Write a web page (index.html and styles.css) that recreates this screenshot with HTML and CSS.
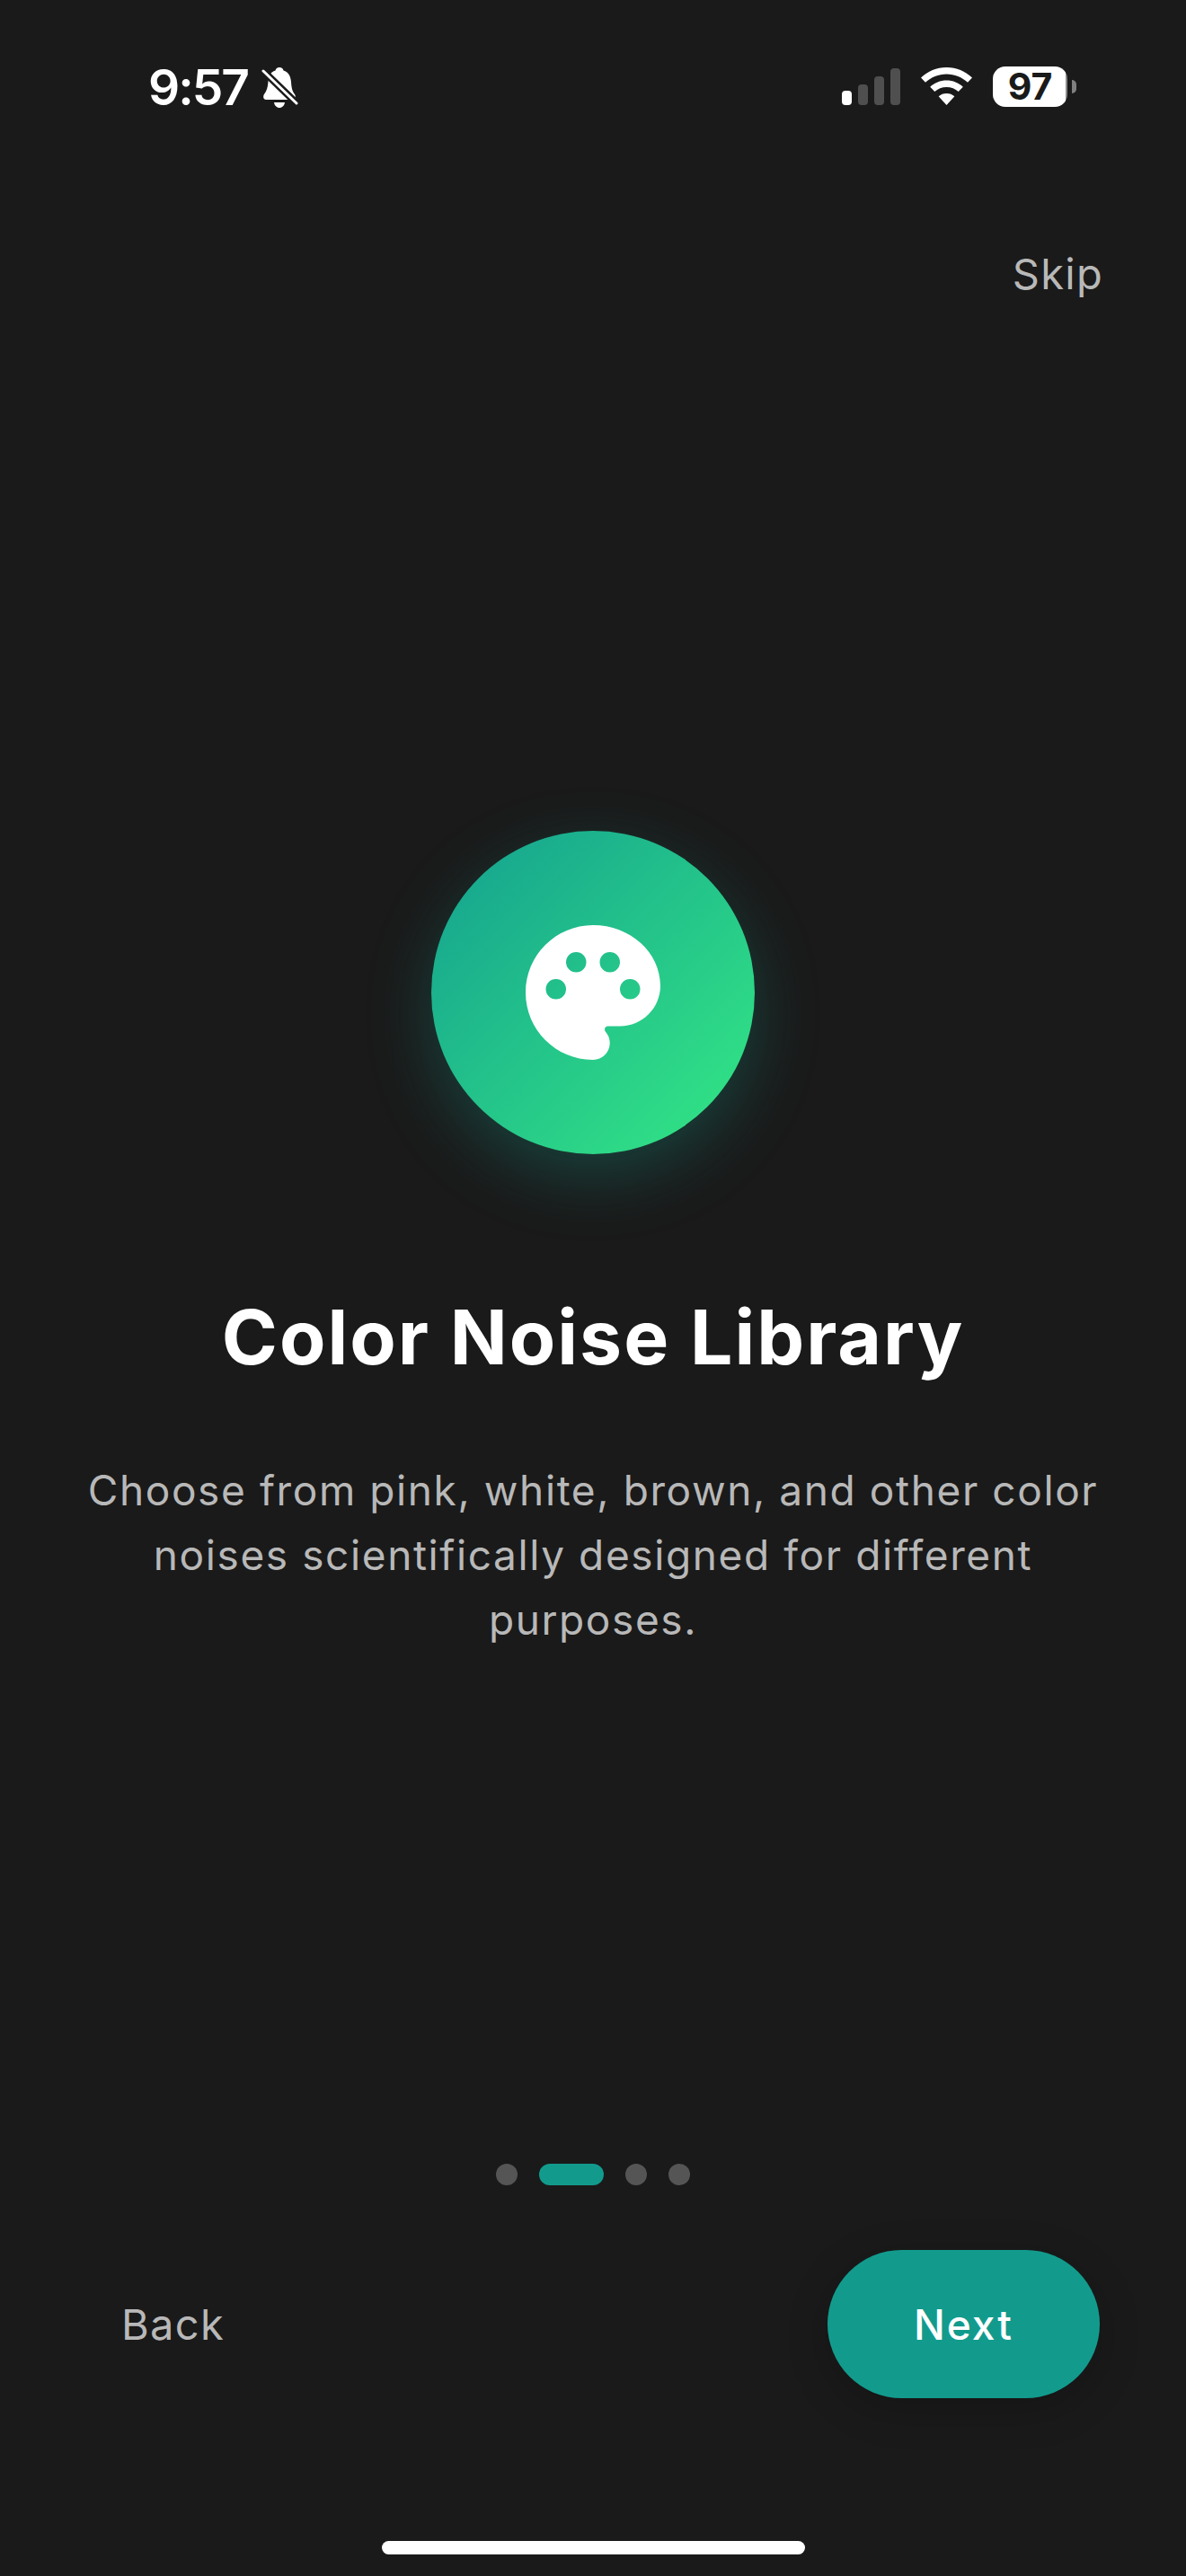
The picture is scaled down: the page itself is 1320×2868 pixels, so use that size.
FILE: index.html
```html
<!DOCTYPE html>
<html lang="en">

<head>
    <meta charset="UTF-8">
    <title>Color Noise Library</title>
    <link rel="stylesheet" href="styles.css">
</head>

<body>
    <div class="status-bar">
        <div class="status-left">
            <span class="time">9:57</span>
            <svg class="bell" viewBox="0 0 42 46">
                <path d="M20 0c2.500 0 4 1.500 4.500 3.500C30 5 32.500 10 33 16c.4 6 1 10 4 14 1.500 2 1 6-2 6H5c-3 0-3.500-4-2-6 3-4 4-8 4.500-14C8 10 10 5 15.500 3.500 16 1.500 17.500 0 20 0z" fill="#fff" />
                <path d="M14 39h12c-.5 3.500-3 6-6 6s-5.500-2.500-6-6z" fill="#fff" />
                <path d="M1 3l39 38" stroke="#1a1a1a" stroke-width="8" />
                <path d="M2 4l37 36" stroke="#fff" stroke-width="3" stroke-linecap="round" />
            </svg>
        </div>
        <div class="status-right">
            <div class="signal">
                <span class="bar bar-1 on"></span>
                <span class="bar bar-2"></span>
                <span class="bar bar-3"></span>
                <span class="bar bar-4"></span>
            </div>
            <svg class="wifi" viewBox="0 0 57 42">
                <path d="M28.500 0C39.500 0 49.500 4.300 57 11.500L52 16.800C45.800 11 37.500 7.500 28.500 7.500S11.200 11 5 16.800L0 11.500C7.500 4.300 17.500 0 28.500 0z" fill="#fff" />
                <path d="M28.500 14.500c7 0 13.500 2.700 18.300 7.200l-5.100 5.300c-3.500-3.200-8.100-5.100-13.200-5.100s-9.700 1.900-13.200 5.100l-5.100-5.300c4.800-4.500 11.300-7.200 18.300-7.200z" fill="#fff" />
                <path d="M28.500 29c3.400 0 6.500 1.200 8.900 3.300L28.500 42l-8.900-9.700c2.400-2.100 5.500-3.300 8.900-3.300z" fill="#fff" />
            </svg>
            <div class="battery">
                <div class="battery-body">97</div>
                <div class="battery-nub"></div>
            </div>
        </div>
    </div>

    <div class="top-row">
        <span class="skip">Skip</span>
    </div>

    <div class="content">
        <div class="icon-circle">
            <svg class="palette" viewBox="0 0 24 24">
                <path fill-rule="evenodd" d="M12 2C6.490 2 2 6.490 2 12s4.490 10 10 10c1.380 0 2.500-1.120 2.500-2.500 0-.610-.230-1.200-.640-1.670-.080-.100-.130-.210-.130-.330 0-.280.220-.500.500-.500H16c3.310 0 6-2.690 6-6 0-4.960-4.490-9-10-9zM6.500 10a1.500 1.500 0 1 0 0 3 1.500 1.500 0 1 0 0-3zM9.500 6a1.500 1.500 0 1 0 0 3 1.500 1.500 0 1 0 0-3zM14.500 6a1.500 1.500 0 1 0 0 3 1.500 1.500 0 1 0 0-3zM17.500 10a1.500 1.500 0 1 0 0 3 1.500 1.500 0 1 0 0-3z" fill="#fff" />
            </svg>
        </div>
        <h1>Color Noise Library</h1>
        <p>Choose from pink, white, brown, and other color noises scientifically designed for different purposes.</p>
    </div>

    <div class="dots">
        <span class="dot"></span>
        <span class="dot active"></span>
        <span class="dot"></span>
        <span class="dot"></span>
    </div>

    <div class="nav-row">
        <span class="back">Back</span>
        <button class="next">Next</button>
    </div>

    <div class="home-bar"></div>
</body>

</html>
```

FILE: styles.css
```css
* {
    box-sizing: border-box;
}

html,
body {
    height: 100%;
}

body {
    font-family: Inter, 'Liberation Sans', sans-serif;
    background-color: #1a1a1a;
    margin: 0;
    display: flex;
    flex-direction: column;
    overflow: hidden;
}

.status-bar {
    height: 194px;
    padding: 67px 122px 0 165px;
    display: flex;
    justify-content: space-between;
    align-items: flex-start;
}

.status-left {
    display: flex;
    align-items: center;
    gap: 15px;
}

.time {
    color: #fff;
    font-size: 55px;
    font-weight: 600;
    line-height: 60px;
    letter-spacing: -2px;
}

.bell {
    width: 42px;
    height: 46px;
    margin-top: 2px;
}

.status-right {
    display: flex;
    align-items: flex-end;
    height: 50px;
}

.signal {
    display: flex;
    align-items: flex-end;
    gap: 7px;
    margin-right: 23px;
}

.bar {
    width: 11px;
    border-radius: 4px;
    background-color: #4f4f4f;
}

.bar.on {
    background-color: #fff;
}

.bar-1 {
    height: 16px;
}

.bar-2 {
    height: 23px;
}

.bar-3 {
    height: 32px;
}

.bar-4 {
    height: 41px;
}

.wifi {
    width: 57px;
    height: 42px;
    margin-right: 23px;
}

.battery {
    display: flex;
    align-items: center;
    margin-bottom: -2px;
}

.battery-body {
    width: 83px;
    height: 45px;
    border-radius: 14px;
    background: linear-gradient(to right, #fff 97%, #8a8a8a 97%);
    color: #1a1a1a;
    font-size: 41px;
    font-weight: 700;
    line-height: 45px;
    text-align: center;
}

.battery-nub {
    width: 5px;
    height: 15px;
    margin-left: 5px;
    border-radius: 0 8px 8px 0;
    background-color: #808080;
}

.top-row {
    display: flex;
    justify-content: flex-end;
    padding: 83px 92px 0 0;
}

.skip {
    color: #b8b8b8;
    font-size: 47px;
    line-height: 56px;
    letter-spacing: 1.3px;
}

.content {
    display: flex;
    flex-direction: column;
    align-items: center;
    padding-top: 592px;
}

.icon-circle {
    width: 360px;
    height: 360px;
    border-radius: 50%;
    background: linear-gradient(135deg, #14a090, #34e884);
    box-shadow: 0 24px 72px rgba(20, 160, 144, 0.3);
    display: flex;
    align-items: center;
    justify-content: center;
}

.palette {
    width: 180px;
    height: 180px;
}

h1 {
    color: #fff;
    font-size: 84px;
    font-weight: 700;
    line-height: 100px;
    letter-spacing: 2px;
    margin: 154px 0 0;
}

p {
    color: #b8b8b8;
    font-size: 46px;
    line-height: 72px;
    letter-spacing: 1.6px;
    text-align: center;
    width: 1160px;
    margin: 84px 0 0;
}

.dots {
    margin-top: 570px;
    display: flex;
    justify-content: center;
    gap: 24px;
}

.dot {
    width: 24px;
    height: 24px;
    border-radius: 12px;
    background-color: #555;
}

.dot.active {
    width: 72px;
    background-color: #129b8d;
}

.nav-row {
    margin-top: 72px;
    padding: 0 96px 0 135px;
    display: flex;
    justify-content: space-between;
    align-items: center;
}

.back {
    color: #b8b8b8;
    font-size: 47px;
    letter-spacing: 1.3px;
}

.next {
    width: 303px;
    height: 165px;
    border: none;
    border-radius: 83px;
    background-color: #129b8d;
    color: #fff;
    font-family: inherit;
    font-size: 46px;
    font-weight: 500;
    letter-spacing: 2px;
    box-shadow: 0 12px 48px rgba(0, 0, 0, 0.2);
}

.home-bar {
    width: 471px;
    height: 15px;
    margin: 159px auto 0;
    border-radius: 8px;
    background-color: #fff;
}
```
